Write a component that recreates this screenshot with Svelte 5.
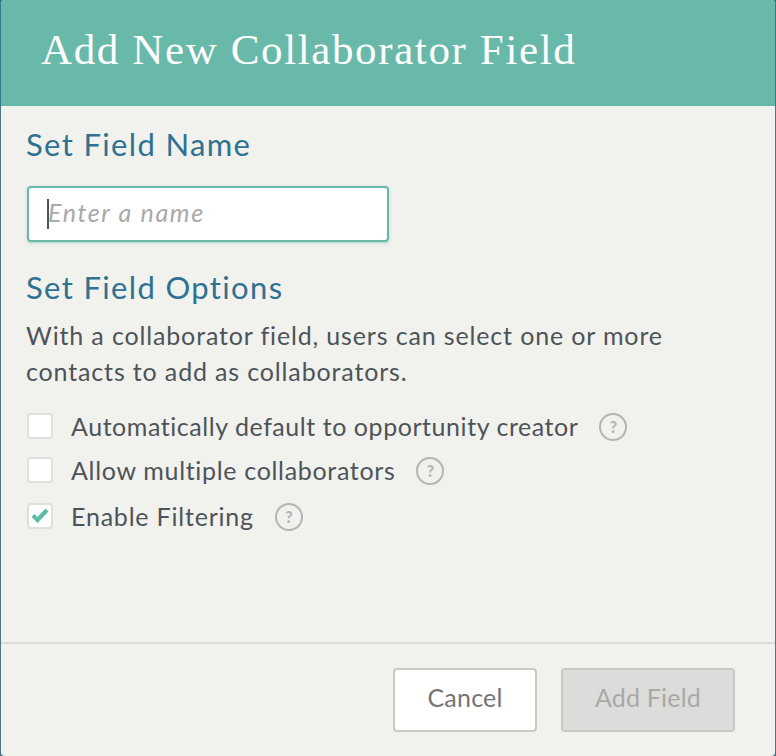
<script>
    let options = [
        { label: "Automatically default to opportunity creator", checked: false, spacing: 0.55 },
        { label: "Allow multiple collaborators", checked: false, spacing: 0.68 },
        { label: "Enable Filtering", checked: true, spacing: 0.8 }
    ];
</script>

<style>
    :global(body) {
        margin: 0;
        background: linear-gradient(#2f7a80 106px, #4f7488 106px);
    }

    .modal {
        width: 774px;
        height: 756px;
        margin-left: 1px;
        background: #f1f1ee;
        border-radius: 4px;
        overflow: hidden;
        display: flex;
        flex-direction: column;
        font-family: Lato, "Liberation Sans", sans-serif;
        color: #4d5459;
    }

    .head {
        height: 106px;
        box-sizing: border-box;
        flex: none;
        background: #68b9a9;
        padding: 25px 0 0 40px;
    }

    h1 {
        margin: 0;
        font: 400 43px/50px "Liberation Serif", serif;
        letter-spacing: 1.62px;
        color: #fff;
    }

    .body {
        flex: 1;
        padding: 20px 25px 0;
    }

    h2 {
        margin: 0;
        font-size: 31px;
        line-height: 36px;
        font-weight: 400;
        letter-spacing: 1.35px;
        color: #2f7190;
    }

    .input {
        width: 362px;
        height: 56px;
        box-sizing: border-box;
        margin: 24px 0 27px 1px;
        padding-left: 18px;
        padding-bottom: 4px;
        display: flex;
        align-items: center;
        background: #fff;
        border: 2px solid #68b9a9;
        border-radius: 4px;
        box-shadow: 0 1px 3px rgba(104, 185, 169, 0.5);
        font-size: 25px;
        font-style: italic;
        letter-spacing: 1.65px;
        color: #a9a9a9;
    }

    .caret {
        width: 2px;
        height: 30px;
        margin: 4px -1px 0 0;
        background: #4d5459;
    }

    .desc {
        margin: 12px 0 23px;
        font-size: 25px;
        line-height: 36px;
        letter-spacing: 0.85px;
    }

    .options {
        display: flex;
        flex-direction: column;
        gap: 18px;
    }

    .option {
        display: flex;
        align-items: center;
        height: 27px;
        font-size: 25px;
    }

    /* second row sits a pixel higher in the original */
    .option:nth-child(2) {
        margin: -1px 0 1px;
    }

    .box {
        width: 26px;
        height: 26px;
        box-sizing: border-box;
        margin: 0 18px 0 1px;
        background: #fff;
        border: 2px solid #dfdfdc;
        border-radius: 4px;
        display: flex;
        align-items: center;
        justify-content: center;
    }

    .help {
        width: 28px;
        height: 28px;
        box-sizing: border-box;
        margin: 2px 0 0 21px;
        border: 2px solid #b4b4b2;
        border-radius: 50%;
        display: flex;
        align-items: center;
        justify-content: center;
        font-size: 16px;
        font-weight: 900;
        letter-spacing: 0;
        color: #b4b4b2;
    }

    .foot {
        flex: none;
        height: 114px;
        box-sizing: border-box;
        border-top: 2px solid #dcdcda;
        padding: 24px 40px 0 0;
        display: flex;
        justify-content: flex-end;
        gap: 24px;
    }

    button {
        height: 64px;
        box-sizing: border-box;
        border: 2px solid #c9c9c6;
        border-radius: 4px;
        font-family: inherit;
        font-size: 25px;
        padding: 0 0 6px;
        letter-spacing: 0.2px;
    }

    .cancel {
        width: 144px;
        background: #fff;
        color: #757575;
    }

    .add {
        width: 174px;
        background: #dcdcda;
        color: #a9a9a9;
    }
</style>

<div class="modal">
    <div class="head">
        <h1>Add New Collaborator Field</h1>
    </div>
    <div class="body">
        <h2>Set Field Name</h2>
        <div class="input"><span class="caret"></span>Enter a name</div>
        <h2>Set Field Options</h2>
        <p class="desc">With a collaborator field, users can select one or more<br />contacts to add as collaborators.</p>
        <div class="options">
            {#each options as opt}
                <div class="option" style:letter-spacing="{opt.spacing}px">
                    <span class="box">
                        {#if opt.checked}
                            <svg width="18" height="15" viewBox="0 0 18 15"><path d="M2 7.5l4.5 4.5L16 2" fill="none" stroke="#5dbba8" stroke-width="4.2" /></svg>
                        {/if}
                    </span>
                    {opt.label}
                    <span class="help">?</span>
                </div>
            {/each}
        </div>
    </div>
    <div class="foot">
        <button class="cancel">Cancel</button>
        <button class="add" disabled>Add Field</button>
    </div>
</div>
